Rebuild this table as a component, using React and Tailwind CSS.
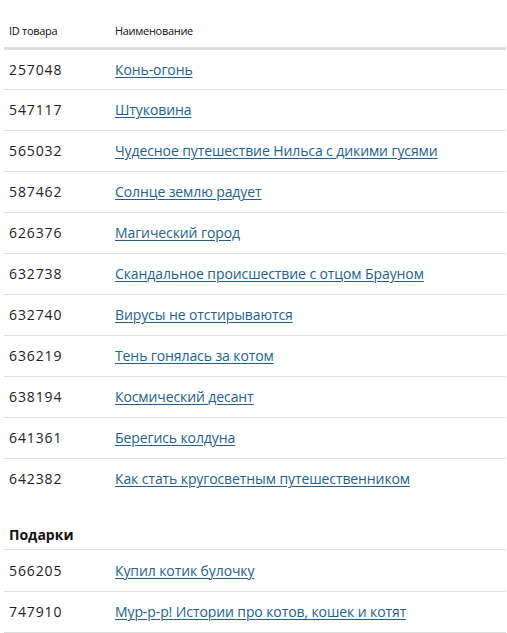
const items = [
  ["257048", "Конь-огонь"],
  ["547117", "Штуковина"],
  ["565032", "Чудесное путешествие Нильса с дикими гусями"],
  ["587462", "Солнце землю радует"],
  ["626376", "Магический город"],
  ["632738", "Скандальное происшествие с отцом Брауном"],
  ["632740", "Вирусы не отстирываются"],
  ["636219", "Тень гонялась за котом"],
  ["638194", "Космический десант"],
  ["641361", "Берегись колдуна"],
  ["642382", "Как стать кругосветным путешественником"],
];

const gifts = [
  ["566205", "Купил котик булочку"],
  ["747910", "Мур-р-р! Истории про котов, кошек и котят"],
];

function Row({ id, name, last }) {
  return (
    <tr className={last ? "" : "border-b border-[#dddddd]"}>
      <td className="h-[41px] pl-[5px] w-[111px] align-middle text-[#222] tracking-[0.9px]">{id}</td>
      <td className="h-[41px] align-middle tracking-[-0.1px]">
        <a href="#" className="text-[#245f8c] underline underline-offset-2 decoration-1">
          {name}
        </a>
      </td>
    </tr>
  );
}

export default function App() {
  return (
    <div className="bg-white min-h-[633px] pl-[4px] text-[14px] font-['Open_Sans',sans-serif]">
      <table className="w-[502px] border-collapse">
        <thead>
          <tr className="border-b-[3px] border-[#dddddd]">
            <th className="h-[48px] pl-[5px] pb-[7px] align-bottom text-left font-normal text-[11px] text-[#111] tracking-[-0.3px]">
              ID товара
            </th>
            <th className="h-[48px] pb-[7px] align-bottom text-left font-normal text-[11px] text-[#111] tracking-[-0.3px]">
              Наименование
            </th>
          </tr>
        </thead>
        <tbody>
          {items.map(([id, name], i) => (
            <Row key={id} id={id} name={name} last={i === items.length - 1} />
          ))}
        </tbody>
      </table>
      <h3 className="h-[51px] pl-[5px] pb-[4px] flex items-end font-bold text-[14px] text-[#111] border-b border-[#dddddd] w-[502px]">
        Подарки
      </h3>
      <table className="w-[502px] border-collapse">
        <tbody>
          {gifts.map(([id, name]) => (
            <Row key={id} id={id} name={name} />
          ))}
        </tbody>
      </table>
    </div>
  );
}
